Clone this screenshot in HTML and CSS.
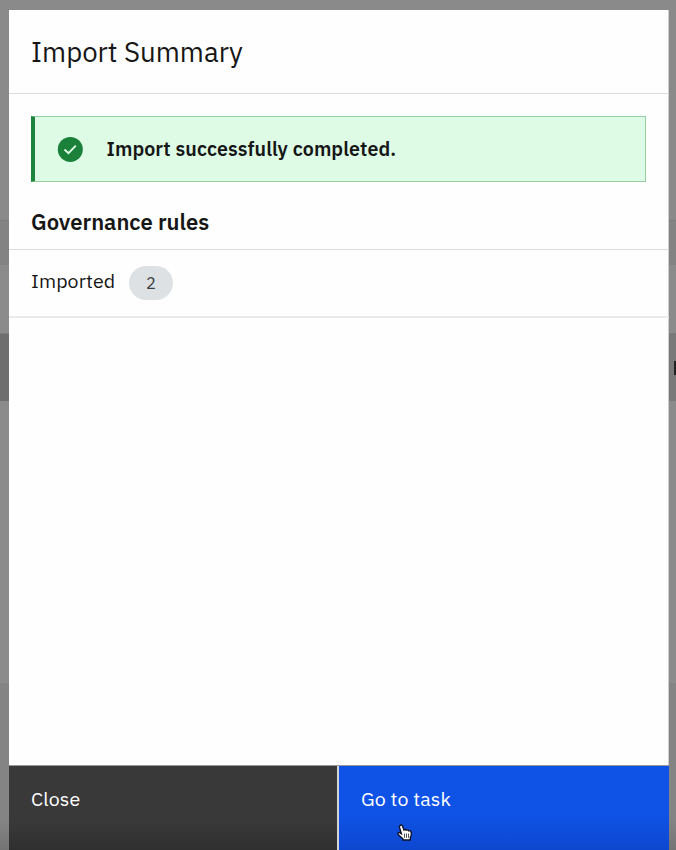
FILE: index.html
```html
<!DOCTYPE html>
<html lang="en">
<head>
<meta charset="utf-8">
<title>Import Summary</title>
<link rel="stylesheet" href="styles.css">
</head>
<body>
<div class="backdrop"><span class="peek"></span></div>
<main class="modal">
  <header class="modal-header"><h1>Import Summary</h1></header>
  <section class="modal-body">
    <div class="notice">
      <svg class="notice-icon" viewBox="0 0 26 26"><circle cx="13.3" cy="13.4" r="12.5" fill="#1b8039"/><path d="M7.5 13.5l4 3.6 7.3-7.5" fill="none" stroke="#defbe6" stroke-width="1.9"/></svg>
      <strong>Import successfully completed.</strong>
    </div>
    <h2>Governance rules</h2>
    <div class="row"><span class="row-label">Imported</span><span class="tag">2</span></div>
  </section>
  <footer class="actions">
    <button class="btn secondary">Close</button>
    <button class="btn primary">Go to task</button>
  </footer>
</main>
<svg class="cursor" viewBox="0 0 16 18"><path d="M3 1.5Q4.5.3 5.5 2L7 6Q8.3 5 9.3 6.2Q10.8 5.3 11.7 6.8Q13.7 6.2 14.2 8.3Q14.8 11 13.3 13.3V16H5.9V14.8L1.4 10.7Q.2 8.8 2 8.4L4.4 9.7L2.5 3.5Q2.2 2.3 3 1.5Z" fill="#fff" stroke="#101223" stroke-width="1.4"/><path d="M7.5 9.5v4.3M9.5 9.5v4.3M11.5 9.5v4.3" stroke="#222" stroke-width=".8"/></svg>
</body>
</html>
```
FILE: styles.css
```css
* { box-sizing: border-box; }
body {
  margin: 0;
  height: 850px;
  overflow: hidden;
  padding: 10px 7px 0 9px;
  font-family: "IBM Plex Sans", Inter, "Noto Sans", sans-serif;
  color: #161616;
  background: #8a8a8a;
}
.backdrop {
  position: absolute;
  inset: 0;
  overflow: hidden;
  background: linear-gradient(#8a8a8a 220px, #7c7c7c 220px, #7c7c7c 221px, #838383 221px, #838383 265px, #8b8b8b 265px, #8b8b8b 333px, #6e6e6e 334px, #6e6e6e 401px, #8b8b8b 401px, #8b8b8b 683px, #848484 683px, #848484 820px, #747474 850px);
}
.backdrop::after {
  content: "";
  position: absolute;
  top: 334px;
  right: 0;
  width: 8px;
  height: 67px;
  background: #797979;
}
.peek {
  position: absolute;
  z-index: 1;
  left: 674px;
  top: 361px;
  width: 2px;
  height: 14px;
  background: #222;
}
.modal {
  position: relative;
  display: flex;
  flex-direction: column;
  height: 840px;
  background: #fefefe;
  box-shadow: inset -1px 0 #cecece;
}
.modal-header {
  height: 84px;
  padding: 22px 22px 0;
  border-bottom: 1px solid #dcdcdc;
}
h1, h2 { margin: 0; white-space: nowrap; }
h1 { font-size: 27.6px; font-weight: 400; line-height: 40px; }
.modal-body { flex: 1; padding-top: 22px; }
.notice {
  display: flex;
  align-items: center;
  height: 66px;
  margin: 0 23px 0 22px;
  padding-left: 22px;
  border: 1px solid #94cda3;
  border-left: 4px solid #1f853d;
  background: #defbe6;
}
.notice-icon { width: 26px; height: 26px; margin-right: 23.5px; }
.notice strong { font-size: 19.6px; font-weight: 600; line-height: 28px; letter-spacing: .1px; }
h2 {
  height: 68px;
  padding: 26px 22px 0;
  border-bottom: 1px solid #dcdcdc;
  font-size: 22px;
  font-weight: 600;
  line-height: 28px;
}
.row {
  display: flex;
  height: 68px;
  padding: 16px 22px 0;
  border-bottom: 2px solid #eaeaea;
}
.row-label { width: 98px; font-size: 19.6px; line-height: 30px; letter-spacing: .1px; white-space: nowrap; }
.tag {
  width: 44px;
  height: 34px;
  border-radius: 17px;
  background: #dde1e4;
  color: #393e42;
  font-size: 16.5px;
  line-height: 34px;
  text-align: center;
}
.actions {
  display: grid;
  grid-template-columns: 328px 330px;
  gap: 2px;
  height: 85px;
  border-top: 1px solid #999;
  background: #d4d4d4;
}
.btn {
  border: 0;
  padding: 18px 22px 0;
  display: flex;
  align-items: flex-start;
  color: #fff;
  font: inherit;
  font-size: 19.6px;
  line-height: 29px;
  letter-spacing: .1px;
}
.secondary { background: linear-gradient(#393939 55px, #2f2f2f); }
.primary { background: linear-gradient(#0f52e6 50px, #0d47cf); }
.cursor { position: absolute; left: 397px; top: 824px; width: 16px; height: 18px; }
```
